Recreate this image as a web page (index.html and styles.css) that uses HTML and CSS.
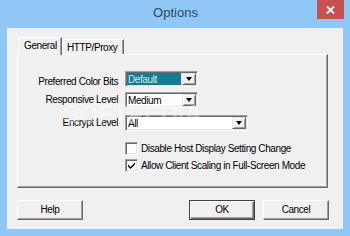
FILE: index.html
```html
<!DOCTYPE html>
<html>
<head>
<meta charset="utf-8">
<link rel="stylesheet" href="styles.css">
</head>
<body>
<div class="window">
  <div class="titlebar">
    <span></span>
    <span class="title">Options</span>
    <div class="close">
      <svg width="9" height="8" viewBox="0 0 9 8"><path d="M1 0.5 L8 7.5 M8 0.5 L1 7.5" stroke="#fff" stroke-width="1.8" fill="none"/></svg>
    </div>
  </div>
  <div class="client">
    <div class="tabs">
      <div class="tab active">General</div>
      <div class="tab">HTTP/Proxy</div>
    </div>
    <div class="panel">
      <div class="row r1">
        <span class="label low">Preferred Color Bits</span>
        <div class="combo w1">
          <span class="value selected">Default</span>
          <span class="drop"><i class="arrow"></i></span>
        </div>
      </div>
      <div class="row r2">
        <span class="label">Responsive Level</span>
        <div class="combo w1">
          <span class="value">Medium</span>
          <span class="drop"><i class="arrow"></i></span>
        </div>
      </div>
      <div class="row r3">
        <span class="label">Encrypt Level</span>
        <div class="combo w3">
          <span class="value">All</span>
          <span class="drop"><i class="arrow"></i></span>
        </div>
      </div>
      <div class="checks">
        <div class="check"><span class="box"></span><span>Disable Host Display Setting Change</span></div>
        <div class="check"><span class="box"><svg width="9" height="9" viewBox="0 0 9 9"><path d="M1 3.5 L3.5 6 L8 1.5 L8 3.5 L3.5 8 L1 5.5 Z" fill="#000"/></svg></span><span>Allow Client Scaling in Full-Screen Mode</span></div>
      </div>
    </div>
    <div class="buttons">
      <div class="btn">Help</div>
      <div class="spacer"></div>
      <div class="btn default">OK</div>
      <div class="btn">Cancel</div>
    </div>
  </div>
  <div class="watermark">SOFTPEDIA</div>
</div>
</body>
</html>
```
FILE: styles.css
```css
html, body {
  margin: 0;
  padding: 0;
  background: #8fc7f6;
}
.window {
  position: relative;
  width: 350px;
  height: 236px;
  box-sizing: border-box;
  padding: 0 7px 7px;
  background: #8fc7f6;
  font-family: "Liberation Sans", Arial, sans-serif;
  font-size: 10px;
  letter-spacing: -0.4px;
  color: #000;
  overflow: hidden;
}
.titlebar {
  height: 28px;
  display: grid;
  grid-template-columns: 1fr auto 1fr;
  margin: 0 -1px 0 0;
}
.title {
  font-size: 13px;
  letter-spacing: 0;
  color: #34465a;
  line-height: 13px;
  padding-top: 6px;
}
.close {
  justify-self: end;
  width: 27px;
  height: 19px;
  background: #c75050;
  display: flex;
  align-items: center;
  justify-content: center;
}
.client {
  height: 201px;
  box-sizing: border-box;
  background: #f0f0f0;
  padding: 9px 14px 0 10px;
  display: flex;
  flex-direction: column;
}
.tabs {
  display: flex;
  align-items: flex-end;
  height: 18px;
  margin-bottom: -1px;
  padding-left: 1px;
  position: relative;
  z-index: 1;
}
.tab {
  box-sizing: border-box;
  height: 15px;
  margin-bottom: 1px;
  border-left: 1px solid #fff;
  border-top: 1px solid #fff;
  border-right: 1px solid #696969;
  box-shadow: inset -1px 0 0 #a0a0a0;
  background: #f0f0f0;
  padding: 0 4px 0 4px;
  line-height: 15px;
  width: 62px;
  white-space: nowrap;
}
.tab.active {
  height: 18px;
  margin-bottom: 0;
  width: 44px;
  padding-left: 5px;
  line-height: 16px;
}
.panel {
  width: 311px;
  height: 134px;
  box-sizing: border-box;
  border: 1px solid;
  border-color: #fff #696969 #696969 #fff;
  box-shadow: inset -1px -1px 0 #a0a0a0;
  padding-top: 16px;
  display: flex;
  flex-direction: column;
}
.row {
  display: flex;
  align-items: center;
  height: 16px;
}
.r2 { margin-top: 5px; }
.r3 { margin-top: 7px; }
.label {
  width: 100px;
  margin-right: 7px;
  text-align: right;
  white-space: nowrap;
  line-height: 16px;
}
.label.low { position: relative; top: 3px; }
.combo {
  box-sizing: border-box;
  height: 16px;
  background: #fff;
  border: 1px solid;
  border-color: #a0a0a0 #fff #fff #a0a0a0;
  box-shadow: inset 1px 1px 0 #696969, inset -1px -1px 0 #e3e3e3;
  display: flex;
  padding: 1px;
}
.w1 { width: 73px; }
.w3 { width: 123px; }
.value {
  flex: 1;
  line-height: 13px;
  padding-left: 1px;
  margin: 0;
  white-space: nowrap;
}
.value.selected {
  background: #167c92;
  color: #cfe9ef;
  margin: 0 1px 0 0;
  line-height: 14px;
}
.drop {
  width: 14px;
  box-sizing: border-box;
  background: #f0f0f0;
  border: 1px solid;
  border-color: #e3e3e3 #696969 #696969 #e3e3e3;
  box-shadow: inset 1px 1px 0 #fff, inset -1px -1px 0 #a0a0a0;
  display: flex;
  align-items: center;
  justify-content: center;
}
.arrow {
  width: 0;
  height: 0;
  border-left: 3.5px solid transparent;
  border-right: 3.5px solid transparent;
  border-top: 4px solid #000;
}
.checks {
  margin-top: 11px;
  padding-left: 107px;
  display: flex;
  flex-direction: column;
  gap: 4px;
}
.check {
  display: flex;
  align-items: center;
  height: 13px;
  gap: 3px;
  white-space: nowrap;
}
.box {
  box-sizing: border-box;
  width: 13px;
  height: 13px;
  background: #fff;
  border: 1px solid;
  border-color: #a0a0a0 #fff #fff #a0a0a0;
  box-shadow: inset 1px 1px 0 #696969, inset -1px -1px 0 #e3e3e3;
  display: flex;
  align-items: center;
  justify-content: center;
}
.buttons {
  margin-top: 12px;
  display: flex;
  gap: 8px;
}
.spacer { flex: 1; }
.btn {
  box-sizing: border-box;
  width: 66px;
  height: 20px;
  border: 1px solid;
  border-color: #fff #696969 #696969 #fff;
  box-shadow: inset -1px -1px 0 #a0a0a0;
  background: #f0f0f0;
  text-align: center;
  line-height: 18px;
}
.btn.default {
  border: 1px solid #404040;
  box-shadow: inset 1px 1px 0 #fff, inset -1px -1px 0 #696969, inset -2px -2px 0 #a0a0a0;
}
.watermark {
  position: absolute;
  left: 63px;
  top: 100px;
  font-weight: bold;
  font-size: 25px;
  letter-spacing: -0.5px;
  color: rgba(255, 255, 255, 0.35);
  pointer-events: none;
}
```
